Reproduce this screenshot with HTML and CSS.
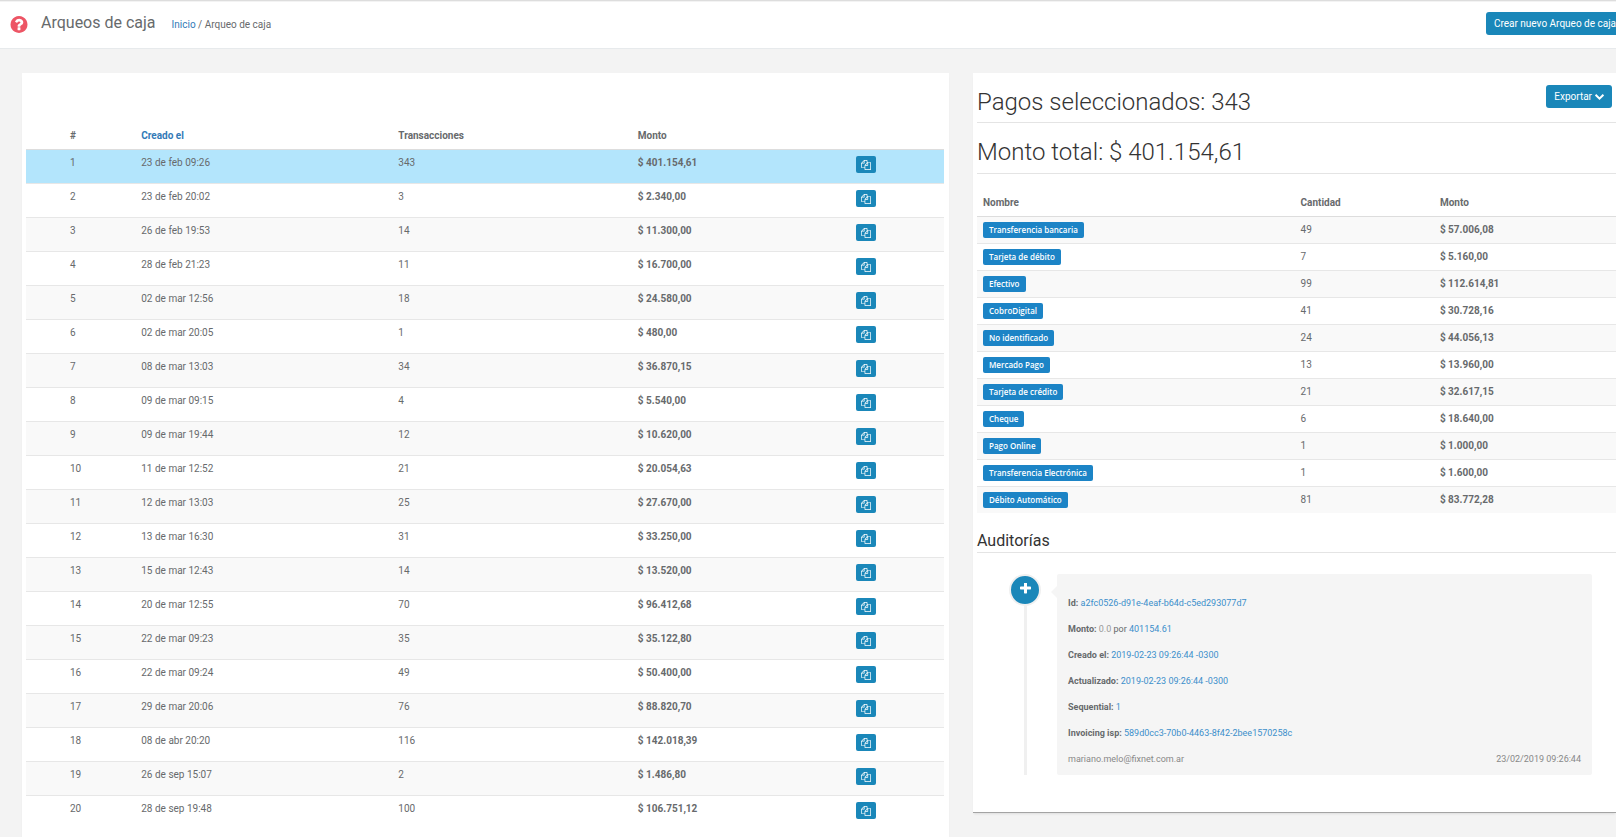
FILE: index.html
```html
<!DOCTYPE html>
<html lang="es">
<head>
<meta charset="utf-8">
<meta name="viewport" content="width=device-width, initial-scale=1">
<title>Arqueos de caja</title>
<link rel="stylesheet" href="styles.css">
</head>
<body>
<svg class="sprite" aria-hidden="true">
  <symbol id="copy" viewBox="0 0 1792 1792"><path d="M1696 384q40 0 68 28t28 68v1216q0 40-28 68t-68 28h-960q-40 0-68-28t-28-68v-288h-544q-40 0-68-28t-28-68v-672q0-40 20-88t48-76l408-408q28-28 76-48t88-20h416q40 0 68 28t28 68v328q68-40 128-40h416zm-544 213l-299 299h299v-299zm-640-384l-299 299h299v-299zm196 647l316-316v-416h-384v416q0 40-28 68t-68 28h-416v640h512v-256q0-40 20-88t48-76zm956 804v-1152h-384v416q0 40-28 68t-68 28h-416v640h896z"/></symbol>
</svg>
<header class="topbar">
  <svg class="help" viewBox="128 128 1536 1536" aria-hidden="true"><path d="M1024 1376v-192q0-14-9-23t-23-9h-192q-14 0-23 9t-9 23v192q0 14 9 23t23 9h192q14 0 23-9t9-23zm256-672q0-88-55.500-163t-138.500-116-170-41q-243 0-371 213-15 24 8 42l132 100q7 6 19 6 16 0 25-12 53-68 86-92 34-24 86-24 48 0 85.500 26t37.500 59q0 38-20 61t-68 45q-63 28-115.500 86.500t-52.500 125.500v36q0 14 9 23t23 9h192q14 0 23-9t9-23q0-19 21.500-49.500t54.500-49.500q32-18 49-28.500t46-35 44.500-48 28-60.500 12.500-81zm384 192q0 209-103 385.500t-279.500 279.500-385.500 103-385.500-103-279.500-279.500-103-385.500 103-385.500 279.500-279.500 385.500-103 385.500 103 279.500 279.500 103 385.500z"/></svg>
  <h1 class="title">Arqueos de caja</h1>
  <nav class="crumbs"><a href="#">Inicio</a> / Arqueo de caja</nav>
  <button class="btn create" type="button">Crear nuevo Arqueo de caja</button>
</header>
<main class="columns">
  <section class="panel list">
    <table class="counts">
      <colgroup><col class="c-num"><col class="c-date"><col class="c-trans"><col class="c-amount"><col class="c-action"></colgroup>
      <thead><tr><th>#</th><th><a href="#">Creado el</a></th><th>Transacciones</th><th>Monto</th><th></th></tr></thead>
      <tbody>
        <tr class="selected"><td>1</td><td>23 de feb 09:26</td><td>343</td><td>$ 401.154,61</td><td><button class="copy" type="button" aria-label="Copiar"><svg><use href="#copy"/></svg></button></td></tr>
        <tr><td>2</td><td>23 de feb 20:02</td><td>3</td><td>$ 2.340,00</td><td><button class="copy" type="button" aria-label="Copiar"><svg><use href="#copy"/></svg></button></td></tr>
        <tr><td>3</td><td>26 de feb 19:53</td><td>14</td><td>$ 11.300,00</td><td><button class="copy" type="button" aria-label="Copiar"><svg><use href="#copy"/></svg></button></td></tr>
        <tr><td>4</td><td>28 de feb 21:23</td><td>11</td><td>$ 16.700,00</td><td><button class="copy" type="button" aria-label="Copiar"><svg><use href="#copy"/></svg></button></td></tr>
        <tr><td>5</td><td>02 de mar 12:56</td><td>18</td><td>$ 24.580,00</td><td><button class="copy" type="button" aria-label="Copiar"><svg><use href="#copy"/></svg></button></td></tr>
        <tr><td>6</td><td>02 de mar 20:05</td><td>1</td><td>$ 480,00</td><td><button class="copy" type="button" aria-label="Copiar"><svg><use href="#copy"/></svg></button></td></tr>
        <tr><td>7</td><td>08 de mar 13:03</td><td>34</td><td>$ 36.870,15</td><td><button class="copy" type="button" aria-label="Copiar"><svg><use href="#copy"/></svg></button></td></tr>
        <tr><td>8</td><td>09 de mar 09:15</td><td>4</td><td>$ 5.540,00</td><td><button class="copy" type="button" aria-label="Copiar"><svg><use href="#copy"/></svg></button></td></tr>
        <tr><td>9</td><td>09 de mar 19:44</td><td>12</td><td>$ 10.620,00</td><td><button class="copy" type="button" aria-label="Copiar"><svg><use href="#copy"/></svg></button></td></tr>
        <tr><td>10</td><td>11 de mar 12:52</td><td>21</td><td>$ 20.054,63</td><td><button class="copy" type="button" aria-label="Copiar"><svg><use href="#copy"/></svg></button></td></tr>
        <tr><td>11</td><td>12 de mar 13:03</td><td>25</td><td>$ 27.670,00</td><td><button class="copy" type="button" aria-label="Copiar"><svg><use href="#copy"/></svg></button></td></tr>
        <tr><td>12</td><td>13 de mar 16:30</td><td>31</td><td>$ 33.250,00</td><td><button class="copy" type="button" aria-label="Copiar"><svg><use href="#copy"/></svg></button></td></tr>
        <tr><td>13</td><td>15 de mar 12:43</td><td>14</td><td>$ 13.520,00</td><td><button class="copy" type="button" aria-label="Copiar"><svg><use href="#copy"/></svg></button></td></tr>
        <tr><td>14</td><td>20 de mar 12:55</td><td>70</td><td>$ 96.412,68</td><td><button class="copy" type="button" aria-label="Copiar"><svg><use href="#copy"/></svg></button></td></tr>
        <tr><td>15</td><td>22 de mar 09:23</td><td>35</td><td>$ 35.122,80</td><td><button class="copy" type="button" aria-label="Copiar"><svg><use href="#copy"/></svg></button></td></tr>
        <tr><td>16</td><td>22 de mar 09:24</td><td>49</td><td>$ 50.400,00</td><td><button class="copy" type="button" aria-label="Copiar"><svg><use href="#copy"/></svg></button></td></tr>
        <tr><td>17</td><td>29 de mar 20:06</td><td>76</td><td>$ 88.820,70</td><td><button class="copy" type="button" aria-label="Copiar"><svg><use href="#copy"/></svg></button></td></tr>
        <tr><td>18</td><td>08 de abr 20:20</td><td>116</td><td>$ 142.018,39</td><td><button class="copy" type="button" aria-label="Copiar"><svg><use href="#copy"/></svg></button></td></tr>
        <tr><td>19</td><td>26 de sep 15:07</td><td>2</td><td>$ 1.486,80</td><td><button class="copy" type="button" aria-label="Copiar"><svg><use href="#copy"/></svg></button></td></tr>
        <tr><td>20</td><td>28 de sep 19:48</td><td>100</td><td>$ 106.751,12</td><td><button class="copy" type="button" aria-label="Copiar"><svg><use href="#copy"/></svg></button></td></tr>
      </tbody>
    </table>
  </section>
  <section class="panel detail">
    <div class="headline">
      <h2>Pagos seleccionados: 343</h2>
      <button class="btn" type="button">Exportar <svg class="chevron" viewBox="90 533 1612 1035" aria-hidden="true"><path d="M1683 808l-742 741q-19 19-45 19t-45-19l-742-741q-19-19-19-45.500t19-45.500l166-165q19-19 45-19t45 19l531 531 531-531q19-19 45-19t45 19l166 165q19 19 19 45.500t-19 45.500z"/></svg></button>
    </div>
    <div class="headline"><h2>Monto total: $ 401.154,61</h2></div>
    <table class="methods">
      <colgroup><col class="m-name"><col class="m-count"><col class="m-amount"></colgroup>
      <thead><tr><th>Nombre</th><th>Cantidad</th><th>Monto</th></tr></thead>
      <tbody>
        <tr><td><span class="badge">Transferencia bancaria</span></td><td>49</td><td>$ 57.006,08</td></tr>
        <tr><td><span class="badge">Tarjeta de débito</span></td><td>7</td><td>$ 5.160,00</td></tr>
        <tr><td><span class="badge">Efectivo</span></td><td>99</td><td>$ 112.614,81</td></tr>
        <tr><td><span class="badge">CobroDigital</span></td><td>41</td><td>$ 30.728,16</td></tr>
        <tr><td><span class="badge">No identificado</span></td><td>24</td><td>$ 44.056,13</td></tr>
        <tr><td><span class="badge">Mercado Pago</span></td><td>13</td><td>$ 13.960,00</td></tr>
        <tr><td><span class="badge">Tarjeta de crédito</span></td><td>21</td><td>$ 32.617,15</td></tr>
        <tr><td><span class="badge">Cheque</span></td><td>6</td><td>$ 18.640,00</td></tr>
        <tr><td><span class="badge">Pago Online</span></td><td>1</td><td>$ 1.000,00</td></tr>
        <tr><td><span class="badge">Transferencia Electrónica</span></td><td>1</td><td>$ 1.600,00</td></tr>
        <tr><td><span class="badge">Débito Automático</span></td><td>81</td><td>$ 83.772,28</td></tr>
      </tbody>
    </table>
    <h3 class="subtitle">Auditorías</h3>
    <div class="timeline">
      <div class="rail">
        <span class="dot"><svg viewBox="192 192 1408 1408" aria-hidden="true"><path d="M1600 736v192q0 40-28 68t-68 28h-416v416q0 40-28 68t-68 28h-192q-40 0-68-28t-28-68v-416h-416q-40 0-68-28t-28-68v-192q0-40 28-68t68-28h416v-416q0-40 28-68t68-28h192q40 0 68 28t28 68v416h416q40 0 68 28t28 68z"/></svg></span>
        <span class="line"></span>
      </div>
      <article class="entry">
        <p><b>Id:</b> <span class="new">a2fc0526-d91e-4eaf-b64d-c5ed293077d7</span></p>
        <p><b>Monto:</b> <span class="old">0.0</span> por <span class="new">401154.61</span></p>
        <p><b>Creado el:</b> <span class="new">2019-02-23 09:26:44 -0300</span></p>
        <p><b>Actualizado:</b> <span class="new">2019-02-23 09:26:44 -0300</span></p>
        <p><b>Sequential:</b> <span class="new">1</span></p>
        <p><b>Invoicing isp:</b> <span class="new">589d0cc3-70b0-4463-8f42-2bee1570258c</span></p>
        <footer><span>mariano.melo@fixnet.com.ar</span><time>23/02/2019 09:26:44</time></footer>
      </article>
    </div>
  </section>
</main>
</body>
</html>
```

FILE: styles.css
```css
* { box-sizing: border-box; }

body {
  margin: 0;
  min-height: 100vh;
  overflow-x: hidden;
  background: #f3f3f3;
  color: #676a6c;
  font: 10px/16px Roboto, "Liberation Sans", sans-serif;
}

a { color: #337ab7; text-decoration: none; }

.sprite { display: none; }

.topbar {
  display: flex;
  align-items: center;
  height: 49px;
  padding-left: 10px;
  background: #fff;
  border-top: 1px solid #ddd;
  border-bottom: 1px solid #e7eaec;
  box-shadow: inset 0 1px 0 #f3f3f3;
}

.help { width: 18px; height: 18px; margin-right: 13px; padding-bottom: 1px; fill: #ed5565; }
.title { margin: 0 16px 0 0; padding-bottom: 3px; font-size: 16px; line-height: 20px; font-weight: 400; }

.btn {
  display: inline-flex;
  align-items: center;
  gap: 3px;
  height: 23px;
  padding: 0 8px;
  border: 0;
  border-radius: 3px;
  background: #1a87b9;
  color: #fff;
  font: 10px/15px Roboto, "Liberation Sans", sans-serif;
  white-space: nowrap;
}

/* The action runs past the right edge of the bar. */
.create { margin-left: auto; margin-right: -8px; margin-bottom: 2px; }
.chevron { width: 9px; height: 6px; fill: #fff; }

.columns {
  display: grid;
  grid-template-columns: 927fr 643fr;
  gap: 24px;
  align-items: start;
  padding: 24px 0 0 22px;
}

.panel {
  background: #fff;
  box-shadow: 0 1px 0 #a3a3a3, 0 3px 2px -1px #ddd;
}

.list { padding: 50px 5px 8px 4px; }
.detail { padding: 12px 0 37px 4px; }

table { width: 100%; border-collapse: separate; border-spacing: 0; table-layout: fixed; }
th, td { padding: 5px 6px; text-align: left; vertical-align: top; }
th { font-weight: 700; }
td { border-top: 1px solid #e7e7e7; }
tbody tr:nth-child(odd) { background: #f9f9f9; }
tbody tr:first-child td { border-top-color: #ddd; }

.counts td { height: 34px; }
.counts th:first-child, .counts td:first-child { padding-left: 44px; }
.counts td:nth-child(4), .methods td:nth-child(3) { font-weight: 700; }
.counts .selected { background: #b3e5fc; }

.c-num { width: 11.9%; }
.c-date { width: 28%; }
.c-trans { width: 26.1%; }
.c-amount { width: 23.8%; }
.c-action { width: 10.2%; }

.copy {
  display: flex;
  align-items: center;
  justify-content: center;
  width: 20px;
  height: 17px;
  margin-top: 1px;
  padding: 0;
  border: 0;
  border-radius: 2px;
  background: #1a87b9;
}
.copy svg { width: 10px; height: 10px; fill: #fff; }

.headline {
  display: flex;
  justify-content: space-between;
  align-items: flex-start;
  height: 38px;
  border-bottom: 1px solid #e4e4e4;
}
.headline + .headline { height: 51px; padding-top: 12px; }
.headline .btn { margin-right: 4px; }
.headline h2 { margin: 0; color: #333; font-size: 24px; line-height: 34px; font-weight: 300; }

.methods { margin-top: 16px; }
.methods td { height: 27px; }
.m-name { width: 49.7%; }
.m-count { width: 21.8%; }
.m-amount { width: 28.5%; }

.badge {
  display: inline-block;
  padding: 0 6px;
  border-radius: 2px;
  background: #1c84c6;
  color: #fff;
  font: 600 8px/16px "Open Sans", "Noto Sans", sans-serif;
  vertical-align: top;
}

.subtitle {
  margin: 18px 0 0;
  padding-bottom: 1px;
  border-bottom: 1px solid #e4e4e4;
  color: #333;
  font-size: 16px;
  line-height: 20px;
  font-weight: 400;
}

.timeline { display: flex; gap: 16px; margin: 21px 24px 0 32px; }
.rail { display: flex; flex-direction: column; align-items: center; width: 32px; }
.dot {
  display: grid;
  place-items: center;
  width: 32px;
  height: 32px;
  padding-bottom: 4px;
  border: 2px solid #f0f0f0;
  border-radius: 50%;
  background: #1a87b9;
}
.dot svg { width: 11px; height: 11px; fill: #fff; }
.line { flex: 1; width: 3px; background: #f0f0f0; }

.entry {
  position: relative;
  flex: 1;
  padding: 23px 11px 9px;
  border-radius: 2px;
  background: #f5f5f5;
  font-size: 9px;
  line-height: 13px;
}
.entry::before {
  content: "";
  position: absolute;
  top: 12px;
  right: 100%;
  border: 6px solid transparent;
  border-left: 0;
  border-right-color: #f5f5f5;
}
.entry p { margin: 0 0 13px; }
.entry .new { color: #3c8fcb; }
.entry .old { color: #999; }
.entry footer { display: flex; justify-content: space-between; color: #888; }
```
